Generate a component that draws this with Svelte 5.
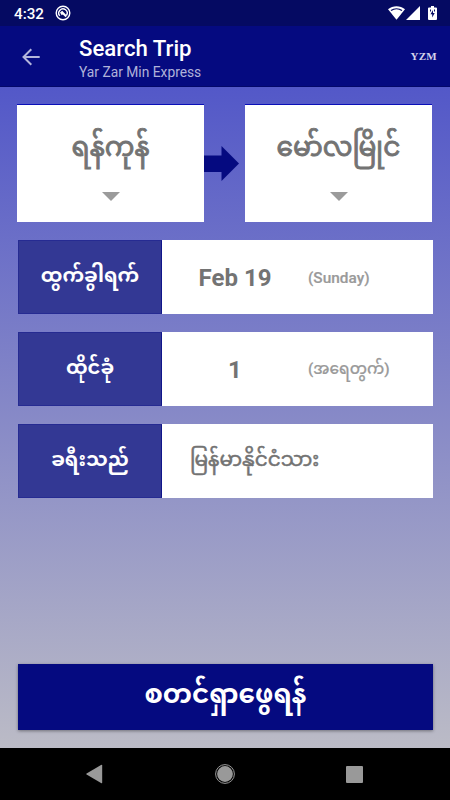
<script>
	const cities = [
		{ id: "from", name: "ရန်ကုန်" },
		{ id: "to", name: "မော်လမြိုင်" },
	];

	const fields = [
		{ label: "ထွက်ခွါရက်", value: "Feb 19", note: "(Sunday)" },
		{ label: "ထိုင်ခုံ", value: "1", note: "(အရေတွက်)" },
		{ label: "ခရီးသည်", text: "မြန်မာနိုင်ငံသား" },
	];
</script>

<div class="screen">
	<div class="status-bar">
		<span class="clock">4:32</span>
		<svg class="app-icon" width="16" height="16" viewBox="0 0 16 16">
			<circle cx="8" cy="8" r="6.8" fill="none" stroke="#fff" stroke-width="1.4" />
			<path d="M4.8 10.8A4.2 4.2 0 1 1 11.5 10.3" fill="none" stroke="#fff" stroke-width="1.4" />
			<path d="M5 7.5l2.2-1.7 4.8 4.9-1.4 1.5-2.8-2.7-1.1.8z" fill="#fff" />
		</svg>
		<div class="status-right">
			<svg width="17" height="14" viewBox="0 0 17 14">
				<path d="M0 3.3C4.8-.8 12.2-.8 17 3.3L8.5 13.8z" fill="#fff" />
				<path d="M3 4.5C6.2 2.2 10.8 2.2 14 4.5" fill="none" stroke="#050a62" stroke-width="1.3" />
			</svg>
			<svg width="14" height="14" viewBox="0 0 14 14">
				<path d="M14 0v14H0z" fill="#fff" />
			</svg>
			<svg class="battery" width="9" height="14" viewBox="0 0 9 14">
				<path d="M3 0h3v1.400h2q1 0 1 1V13q0 1-1 1H1q-1 0-1-1V2.400q0-1 1-1h2z" fill="#fff" />
				<path d="M5 4L2.500 8.300h1.700v3.200l2.500-4.500H5zM2 3.500h1v2H2zM6 3.500h1v2H6z" fill="#050a62" />
			</svg>
		</div>
	</div>

	<header class="app-bar">
		<svg class="back" width="18" height="18" viewBox="0 0 18 18">
			<path d="M17.700 9H1.500M9.300 1.200L1.500 9l7.800 7.800" fill="none" stroke="#b4b6dc" stroke-width="2" />
		</svg>
		<div class="titles">
			<h1>Search Trip</h1>
			<p>Yar Zar Min Express</p>
		</div>
		<span class="brand">YZM</span>
	</header>

	<main>
		<div class="route">
			{#each cities as city, i (city.id)}
				{#if i > 0}
					<svg class="arrow" width="41" height="35" viewBox="0 0 41 35">
						<path d="M0 9.500h17.500V0L35 17.500 17.500 35V26H0z" fill="#050a80" />
					</svg>
				{/if}
				<button class="city">
					<span>{city.name}</span>
					<svg width="18" height="9" viewBox="0 0 18 9">
						<path d="M0 0h18L9 9z" fill="#9b9b9b" />
					</svg>
				</button>
			{/each}
		</div>

		{#each fields as field}
			<div class="field">
				<div class="label">{field.label}</div>
				{#if field.text}
					<div class="text">{field.text}</div>
				{:else}
					<div class="value">{field.value}</div>
					<div class="note">{field.note}</div>
				{/if}
			</div>
		{/each}

		<button class="search">စတင်ရှာဖွေရန်</button>
	</main>

	<nav class="nav-bar">
		<svg width="18" height="20" viewBox="0 0 18 20">
			<path d="M15 1q1.200-.6 1.200.6v16.800q0 1.200-1.200.6L.6 10.600q-.8-.6 0-1.200z" fill="#999" />
		</svg>
		<svg width="20" height="20" viewBox="0 0 20 20">
			<circle cx="10" cy="10" r="9.400" fill="none" stroke="#999" stroke-width="1" />
			<circle cx="10" cy="10" r="7.900" fill="#999" />
		</svg>
		<svg width="17" height="17" viewBox="0 0 17 17">
			<rect width="17" height="17" rx="1" fill="#999" />
		</svg>
	</nav>
</div>

<style>
	:global(body) {
		margin: 0;
	}

	.screen {
		width: 450px;
		height: 800px;
		display: flex;
		flex-direction: column;
		overflow: hidden;
		font-family: Roboto, "Noto Sans Myanmar", Padauk, "Noto Sans", sans-serif;
		background: #000;
	}

	.screen * {
		box-sizing: border-box;
	}

	svg {
		display: block;
		flex-shrink: 0;
	}

	button {
		border: 0;
		padding: 0;
		font: inherit;
	}

	.status-bar {
		height: 26px;
		display: flex;
		align-items: center;
		padding: 0 13px 0 14px;
		background: #050a62;
		color: #fff;
	}

	.clock {
		width: 41px;
		font-size: 15.2px;
		font-weight: 500;
		padding-top: 2px;
	}

	.status-right {
		display: flex;
		margin-left: auto;
		gap: 1px;
	}

	.battery {
		margin-left: 7px;
	}

	.app-bar {
		height: 61px;
		display: flex;
		align-items: center;
		padding: 0 13px 0 22px;
		background: #050a80;
		border-bottom: 1px solid #04086a;
	}

	.back {
		margin-top: 2px;
	}

	.titles {
		margin-left: 39px;
		padding-top: 4px;
	}

	h1 {
		margin: 0;
		font-size: 22.2px;
		line-height: 26px;
		font-weight: 500;
		color: #fff;
	}

	p {
		margin: 2px 0 0;
		font-size: 13.8px;
		line-height: 18px;
		color: #b0b2da;
	}

	.brand {
		margin-left: auto;
		font-family: "Liberation Serif", serif;
		font-size: 11px;
		font-weight: 700;
		letter-spacing: 0.3px;
		color: #d3d4ea;
	}

	main {
		flex: 1;
		display: flex;
		flex-direction: column;
		padding: 17px 17px 18px;
		background: linear-gradient(#5358c8, #bbbbc6);
	}

	.route {
		display: flex;
		align-items: center;
		height: 118px;
		margin-bottom: 18px;
	}

	.city {
		width: 187px;
		height: 118px;
		display: flex;
		flex-direction: column;
		align-items: center;
		background: #fff;
		border-top: 1px solid #0a0fb8;
		color: #737373;
		font-size: 26.4px;
		-webkit-text-stroke: 0.9px #737373;
	}

	.city span {
		height: 87px;
		line-height: 85px;
		white-space: nowrap;
	}

	.field {
		height: 74px;
		display: flex;
		align-items: center;
		margin: 0 0 18px 1px;
		background: #fff;
		color: #737373;
		white-space: nowrap;
	}

	.label {
		width: 144px;
		height: 74px;
		line-height: 70px;
		text-align: center;
		background: #333894;
		border: 1px solid #262b92;
		border-right-color: #10158a;
		color: #fff;
		font-size: 19.5px;
		font-weight: 700;
	}

	.value {
		width: 146px;
		padding-top: 2px;
		text-align: center;
		font-size: 24px;
		font-weight: 700;
	}

	.note {
		padding-top: 2px;
		color: #9a9a9a;
		font-size: 15.4px;
		font-weight: 500;
		-webkit-text-stroke: 0.2px #9a9a9a;
	}

	.text {
		padding-left: 28px;
		font-size: 20px;
		-webkit-text-stroke: 0.5px #737373;
	}

	.search {
		height: 66px;
		margin: auto 0 0 1px;
		background: #050a80;
		box-shadow: 0 1px 3px rgba(0, 0, 0, 0.4);
		color: #fff;
		font-size: 26.3px;
		font-weight: 700;
	}

	.nav-bar {
		height: 52px;
		display: flex;
		align-items: center;
		justify-content: space-between;
		padding: 0 87px 0 86px;
		background: #000;
	}
</style>
